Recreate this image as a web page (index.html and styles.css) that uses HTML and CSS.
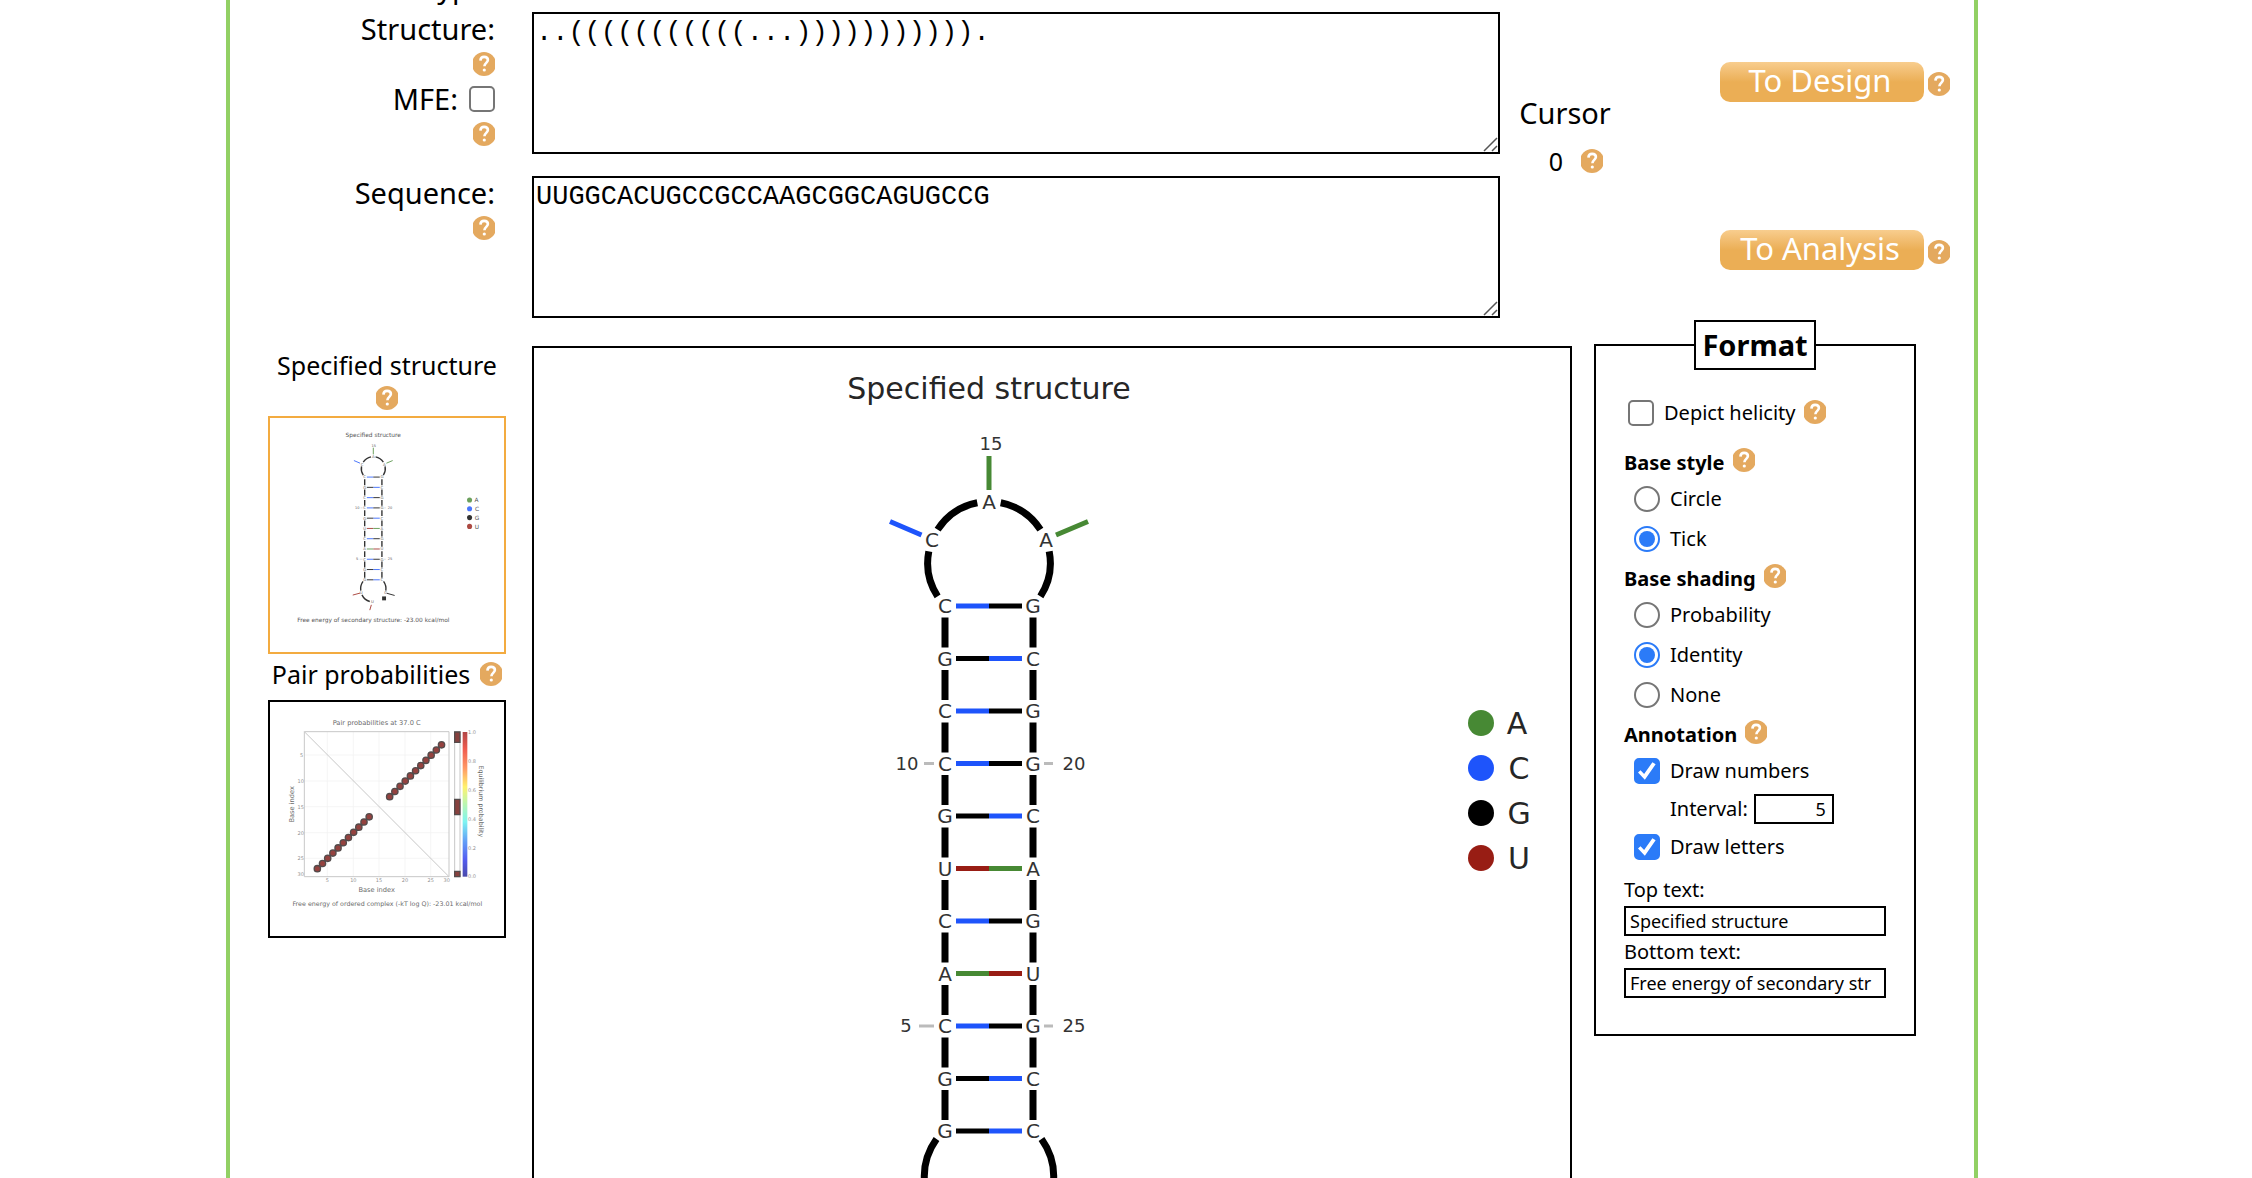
FILE: index.html
```html
<!DOCTYPE html>
<html lang="en">
<head>
<meta charset="utf-8">
<meta name="viewport" content="width=device-width, initial-scale=1">
<title>Structure utilities</title>
<link rel="stylesheet" href="styles.css">
</head>
<body>
<svg class="defs" aria-hidden="true">
  <symbol id="help" viewBox="0 0 22 24">
    <circle cx="11" cy="12" r="12" fill="#e4a95f"/>
    <path d="M7.4 8.6C7.6 5.8 9.2 4.9 11.1 4.9c2.2 0 3.8 1.200 3.800 3.200 0 2.700-3.500 2.900-3.500 6.100" fill="none" stroke="#fff" stroke-width="2.600"/>
    <circle cx="11.300" cy="18" r="1.600" fill="#fff"/>
  </symbol>
  <g id="drawing">
    <text class="plot-title" x="455" y="51">Specified structure</text>
    <g class="backbone">
      <path d="M411 269.500V783" stroke-dasharray="30 22.500"/>
      <path d="M499 269.500V783" stroke-dasharray="30 22.500"/>
      <path d="M466.700 154.800A61.300 61.300 0 0 1 506.400 181.600M515.200 203.300A61.300 61.300 0 0 1 506.400 248.400M443.300 154.800A61.300 61.300 0 0 0 403.600 181.600M394.800 203.300A61.300 61.300 0 0 0 403.600 248.400"/>
      <path d="M402.500 791A65 65 0 0 0 391 838M397 860A65 65 0 0 0 437 894M507.500 791A65 65 0 0 1 519 838"/>
    </g>
    <rect x="500" y="868" width="20" height="20"/>
    <g class="pairs">
      <path class="c" d="M422 258H455M455 310.500H488M422 363H455M422 415.500H455M455 468H488M422 573H455M422 678H455M455 730.500H488M455 783H488M387.500 187L356 173.500"/>
      <path class="g" d="M455 258H488M422 310.500H455M455 363H488M455 415.500H488M422 468H455M455 573H488M455 678H488M422 730.500H455M422 783H455M525 852L564 863"/>
      <path class="u" d="M422 520.500H455M455 625.500H488M387 851L350 861M445 911L437 938"/>
      <path class="a" d="M455 520.500H488M422 625.500H455M455 108V142M522 187L554 173.500"/>
    </g>
    <path class="leader" d="M390 415.500H400M510 415.500H519M385 678H400M510 678H519"/>
    <g class="base">
      <text x="455" y="161">A</text><text x="398" y="199">C</text><text x="512" y="199">A</text>
      <text x="411" y="265">C</text><text x="499" y="265">G</text>
      <text x="411" y="318">G</text><text x="499" y="318">C</text>
      <text x="411" y="370">C</text><text x="499" y="370">G</text>
      <text x="411" y="423">C</text><text x="499" y="423">G</text>
      <text x="411" y="475">G</text><text x="499" y="475">C</text>
      <text x="411" y="528">U</text><text x="499" y="528">A</text>
      <text x="411" y="580">C</text><text x="499" y="580">G</text>
      <text x="411" y="633">A</text><text x="499" y="633">U</text>
      <text x="411" y="685">C</text><text x="499" y="685">G</text>
      <text x="411" y="738">G</text><text x="499" y="738">C</text>
      <text x="411" y="790">G</text><text x="499" y="790">C</text>
      <text x="393" y="857">U</text><text x="519" y="857">G</text><text x="450" y="904">U</text>
    </g>
    <g class="number">
      <text x="457" y="102">15</text>
      <text x="373" y="422">10</text><text x="540" y="422">20</text>
      <text x="372" y="684">5</text><text x="540" y="684">25</text>
    </g>
    <g class="key">
      <circle cx="947" cy="375" r="13" fill="#478934"/><text x="983" y="386">A</text>
      <circle cx="947" cy="420" r="13" fill="#1e54fb"/><text x="985" y="431">C</text>
      <circle cx="947" cy="465" r="13"/><text x="985" y="476">G</text>
      <circle cx="947" cy="510" r="13" fill="#981d14"/><text x="985" y="521">U</text>
    </g>
    <text class="plot-caption" x="455" y="1000">Free energy of secondary structure: -23.00 kcal/mol</text>
  </g>
</svg>

<main class="frame">
  <div class="clipped-row"><span>Type:</span></div>
  <section class="inputs">
    <div class="labels">
      <label for="structure">Structure:</label>
      <a class="help" href="#" aria-label="Help: structure"><svg><use href="#help"/></svg></a>
      <label class="mfe">MFE: <input type="checkbox"></label>
      <a class="help" href="#" aria-label="Help: MFE"><svg><use href="#help"/></svg></a>
    </div>
    <textarea id="structure" spellcheck="false">..(((((((((((...))))))))))).</textarea>
    <div class="cursor">
      <span>Cursor</span>
      <div class="cursor-value">0 <a class="help" href="#" aria-label="Help: cursor"><svg><use href="#help"/></svg></a></div>
    </div>
    <div class="actions">
      <div class="action"><button type="button">To Design</button><a class="help" href="#" aria-label="Help: design"><svg><use href="#help"/></svg></a></div>
      <div class="action"><button type="button">To Analysis</button><a class="help" href="#" aria-label="Help: analysis"><svg><use href="#help"/></svg></a></div>
    </div>
    <div class="labels">
      <label for="sequence">Sequence:</label>
      <a class="help" href="#" aria-label="Help: sequence"><svg><use href="#help"/></svg></a>
    </div>
    <textarea id="sequence" spellcheck="false">UUGGCACUGCCGCCAAGCGGCAGUGCCG</textarea>
  </section>

  <section class="results">
    <nav class="thumbs">
      <div class="thumb-label stacked">Specified structure <a class="help" href="#" aria-label="Help: specified structure"><svg><use href="#help"/></svg></a></div>
      <a class="thumb selected" href="#" aria-label="Show specified structure"><svg viewBox="-73 -44 1196 1196"><use href="#drawing"/></svg></a>
      <div class="thumb-label">Pair probabilities <a class="help" href="#" aria-label="Help: pair probabilities"><svg><use href="#help"/></svg></a></div>
      <a class="thumb" href="#" aria-label="Show pair probabilities">
        <svg class="pair-plot" viewBox="60 156 702 702">
          <defs><linearGradient id="jet" x1="0" y1="0" x2="0" y2="1">
            <stop offset="0" stop-color="#a01818"/><stop offset=".12" stop-color="#ee3524"/><stop offset=".25" stop-color="#ff8040"/><stop offset=".38" stop-color="#fff04a"/><stop offset=".5" stop-color="#a8f5a0"/><stop offset=".62" stop-color="#5ff2ee"/><stop offset=".75" stop-color="#3f8cf5"/><stop offset=".88" stop-color="#2a35ee"/><stop offset="1" stop-color="#1c1c96"/>
          </linearGradient></defs>
          <path class="grid" d="M232 245V680M310 245V680M387 245V680M465 245V680M542 245V680M163 315H597M163 393H597M163 470H597M163 548H597M163 625H597"/>
          <path class="axes" d="M163 245H597V680H163ZM163 245L597 680M614 245H630V680H614Z"/>
          <g class="dots"><path d="M202 656L358 500M419 440L575 284"/></g>
          <g class="dots core"><path d="M202 656L358 500M419 440L575 284"/></g>
          <path class="unpaired" d="M614 246H630V277H614ZM614 448H630V494H614ZM614 664H630V680H614Z"/>
          <rect x="638" y="246" width="14" height="434" fill="url(#jet)"/>
          <g class="small">
            <text x="380" y="226" font-size="20">Pair probabilities at 37.0 C</text>
            <text x="380" y="727" font-size="20">Base index</text>
            <text x="412" y="768" font-size="19">Free energy of ordered complex (-kT log Q): -23.01 kcal/mol</text>
            <text transform="translate(131 463) rotate(-90)" font-size="20">Base index</text>
            <text transform="translate(688 454) rotate(90)" font-size="19">Equilibrium probability</text>
          </g>
          <g class="ticks">
            <text x="232" y="696">5</text><text x="310" y="696">10</text><text x="387" y="696">15</text><text x="465" y="696">20</text><text x="542" y="696">25</text><text x="590" y="696">30</text>
            <text x="155" y="321">5</text><text x="152" y="399">10</text><text x="152" y="476">15</text><text x="152" y="554">20</text><text x="152" y="631">25</text><text x="152" y="677">30</text>
            <text x="666" y="251">1.0</text><text x="666" y="338">0.8</text><text x="666" y="425">0.6</text><text x="666" y="512">0.4</text><text x="666" y="599">0.2</text><text x="666" y="685">0.0</text>
          </g>
        </svg>
      </a>
    </nav>

    <figure class="plot"><svg viewBox="0 0 1036 1036" role="img" aria-label="Specified structure"><use href="#drawing"/></svg></figure>

    <fieldset class="format">
      <legend>Format</legend>
      <div class="row"><label><input type="checkbox">Depict helicity</label><a class="help" href="#" aria-label="Help: helicity"><svg><use href="#help"/></svg></a></div>
      <div class="heading">Base style <a class="help" href="#" aria-label="Help: base style"><svg><use href="#help"/></svg></a></div>
      <div class="options">
        <label><input type="radio" name="style">Circle</label>
        <label><input type="radio" name="style" checked>Tick</label>
      </div>
      <div class="heading">Base shading <a class="help" href="#" aria-label="Help: base shading"><svg><use href="#help"/></svg></a></div>
      <div class="options">
        <label><input type="radio" name="shading">Probability</label>
        <label><input type="radio" name="shading" checked>Identity</label>
        <label><input type="radio" name="shading">None</label>
      </div>
      <div class="heading">Annotation <a class="help" href="#" aria-label="Help: annotation"><svg><use href="#help"/></svg></a></div>
      <div class="options tight">
        <label><input type="checkbox" checked>Draw numbers</label>
        <label class="interval">Interval: <input type="text" value="5"></label>
        <label><input type="checkbox" checked>Draw letters</label>
      </div>
      <div class="texts">
        <label for="top-text">Top text:</label>
        <input id="top-text" type="text" value="Specified structure">
        <label for="bottom-text">Bottom text:</label>
        <input id="bottom-text" type="text" value="Free energy of secondary structure: -23.00 kcal/mol">
      </div>
    </fieldset>
  </section>
</main>
</body>
</html>
```
FILE: styles.css
```css
* { box-sizing: border-box; }

body {
  margin: 0;
  padding: 0 274px 0 226px;
  height: 100vh;
  overflow: hidden;
  background: #fff;
  color: #000;
  font-family: "Noto Sans", "Open Sans", sans-serif;
  font-size: 29px;
  line-height: 34px;
}

.defs { position: absolute; width: 0; height: 0; }

.frame {
  min-height: 100vh;
  border: solid #92d064;
  border-width: 0 4px;
}

.clipped-row {
  display: flex;
  align-items: flex-end;
  justify-content: flex-end;
  width: 302px;
  height: 12px;
  padding: 0 38px 8px 0;
  overflow: hidden;
}

/* Inputs */
.inputs {
  display: grid;
  grid-template-columns: 302px 1fr 130px 344px;
  grid-template-rows: 142px 142px;
  row-gap: 22px;
}

.labels {
  display: flex;
  flex-direction: column;
  align-items: flex-end;
  gap: 6px;
  padding-right: 37px;
}

.mfe { display: flex; align-items: center; gap: 11px; }

.help { flex: none; display: block; width: 22px; height: 24px; }
.help svg { display: block; width: 22px; height: 24px; }

textarea {
  display: block;
  width: 100%;
  height: 142px;
  margin: 0;
  padding: 4px 2px 2px;
  border: 2px solid #000;
  background: #fff;
  color: #000;
  font: 27px/30px "Liberation Mono", monospace;
}

textarea::-webkit-resizer {
  background: url("data:image/svg+xml,%3Csvg xmlns='http://www.w3.org/2000/svg' viewBox='0 0 15 15'%3E%3Cpath d='M1 14L14 1M9 14l5-5' stroke='%23555' stroke-width='1.500'/%3E%3C/svg%3E") no-repeat center;
}

.cursor {
  grid-row: 1 / 3;
  grid-column: 3;
  padding-top: 84px;
  display: flex;
  flex-direction: column;
  align-items: center;
  gap: 14px;
}

.cursor-value {
  display: flex;
  align-items: center;
  gap: 18px;
  padding-left: 22px;
  font-size: 25px;
}

.actions {
  grid-row: 1 / 3;
  grid-column: 4;
  display: flex;
  flex-direction: column;
  gap: 128px;
  padding: 50px 0 0 90px;
}

.action { display: flex; align-items: center; gap: 4px; }
.action .help { margin-top: 4px; }

button {
  width: 204px;
  height: 40px;
  padding: 0 4px 4px 0;
  border: 0;
  border-radius: 10px;
  background: linear-gradient(#f8cd8e, #ebae55 50%);
  color: #fff;
  font: 31px/36px "Noto Sans", "Open Sans", sans-serif;
}

/* Results */
.results {
  display: grid;
  grid-template-columns: 302px 1fr 344px;
  padding: 2px 58px 0 0;
  align-items: start;
}

.thumbs { width: 238px; margin: 30px 0 0 38px; }

.thumb-label {
  display: flex;
  align-items: center;
  justify-content: center;
  gap: 10px;
  height: 46px;
  padding-bottom: 6px;
  font-size: 25px;
}

.thumb-label.stacked {
  flex-direction: column;
  gap: 6px;
  height: 66px;
  line-height: 30px;
}

.thumb { display: block; height: 238px; border: 2px solid #000; }
.thumb.selected { border-color: #f3ab40; }
.thumb svg { display: block; width: 100%; height: 100%; opacity: .8; }

.plot { margin: 26px 0 0; border: 2px solid #000; }
.plot svg { display: block; width: 100%; }

/* Structure drawing */
#drawing text, .pair-plot text {
  font-family: "DejaVu Sans", sans-serif;
  text-anchor: middle;
}
#drawing .plot-title { font-size: 30px; fill: #262626; }
#drawing .plot-caption { font-size: 30px; fill: #262626; }
.base text { font-size: 20px; fill: #333; }
.number text { font-size: 18px; fill: #333; }
.key text { font-size: 30px; fill: #262626; }
.backbone { fill: none; stroke: #000; stroke-width: 7; }
.pairs { fill: none; stroke-width: 5; }
.pairs .a { stroke: #478934; }
.pairs .c { stroke: #1e54fb; }
.pairs .g { stroke: #000; }
.pairs .u { stroke: #981d14; }
.leader { stroke: #bbb; stroke-width: 3; }

/* Pair probability plot */
.pair-plot .grid { stroke: #eee; stroke-width: 2; }
.pair-plot .axes { fill: none; stroke: #bbb; stroke-width: 3; }
.dots { fill: none; stroke: #2a2020; stroke-width: 23; stroke-linecap: round; stroke-dasharray: 0 22; }
.dots.core { stroke: #7a1410; stroke-width: 15; }
.unpaired { fill: #6a120e; stroke: #2a2020; stroke-width: 4; }
.small text { fill: #444; }
.ticks text { font-size: 15px; fill: #777; }

/* Format panel */
.format {
  min-width: 0;
  margin: 0 0 0 22px;
  padding: 0 28px 36px;
  border: 2px solid #000;
  font-size: 20px;
  line-height: 26px;
}

.format legend {
  margin: 0 auto;
  width: 122px;
  padding: 0;
  border: 2px solid #000;
  text-align: center;
  font-size: 29px;
  font-weight: bold;
  line-height: 46px;
}

.row { display: flex; gap: 8px; padding: 30px 0 22px 4px; }
.row label, .options label { display: flex; align-items: center; gap: 10px; }

.heading {
  display: flex;
  align-items: flex-start;
  gap: 8px;
  font-weight: bold;
  line-height: 30px;
}

.options {
  display: flex;
  flex-direction: column;
  gap: 14px;
  padding: 8px 0 12px 10px;
}
.options.tight { gap: 10px; padding-bottom: 16px; }
.options .interval { gap: 6px; padding-left: 36px; }

.texts { display: grid; gap: 2px; }
.texts label { line-height: 28px; }

input { margin: 0; }

input[type="checkbox"], input[type="radio"] {
  flex: none;
  appearance: none;
  display: grid;
  place-items: center;
  width: 26px;
  height: 26px;
  border: 2px solid #767676;
  border-radius: 5px;
  background: #fff;
}
input[type="radio"] { border-radius: 50%; }
input:checked { border-color: #2b7bf8; }
input[type="checkbox"]:checked { background: #2b7bf8; }
input[type="radio"]:checked::after {
  content: "";
  width: 16px;
  height: 16px;
  border-radius: 50%;
  background: #2b7bf8;
}
input[type="checkbox"]:checked::after {
  content: "";
  width: 18px;
  height: 18px;
  background: #fff;
  clip-path: polygon(0 58%, 14% 46%, 34% 66%, 80% 2%, 98% 12%, 38% 98%);
}

input[type="text"] {
  width: 100%;
  height: 30px;
  padding: 0 12px 0 4px;
  border: 2px solid #000;
  background: #fff;
  color: #000;
  font: 18px "Noto Sans", "Open Sans", sans-serif;
}
.interval input[type="text"] { width: 80px; padding: 0 6px; text-align: right; }
```
